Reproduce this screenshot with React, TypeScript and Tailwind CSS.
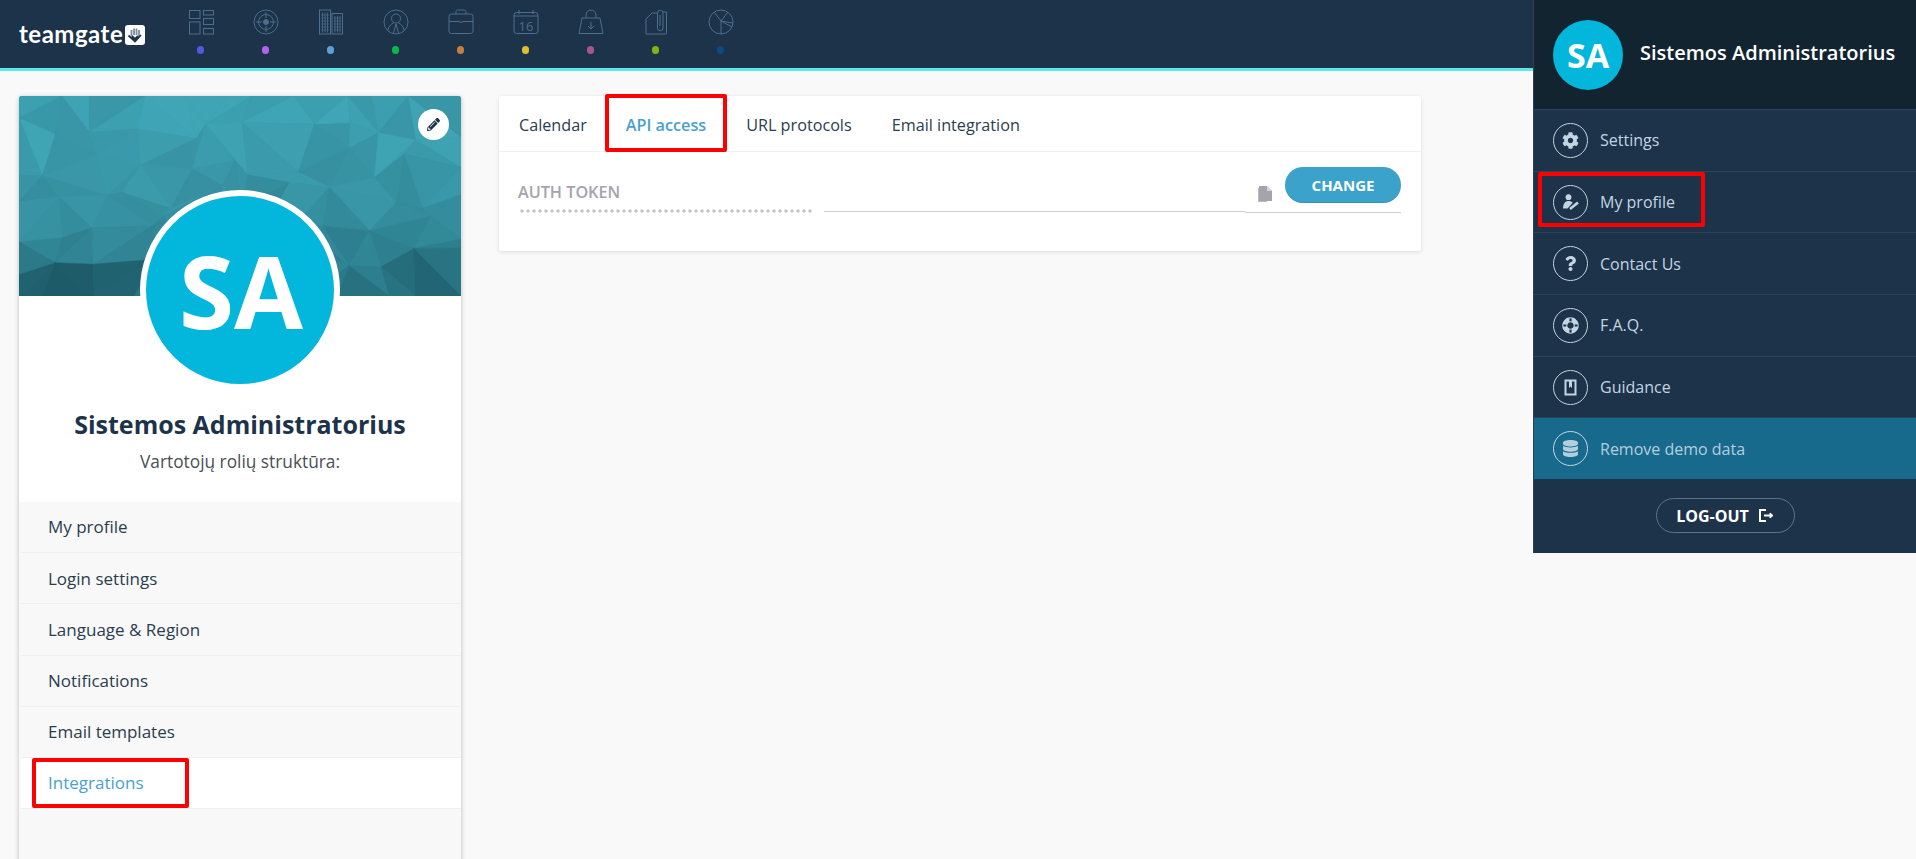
import React from 'react';
import { FaCog, FaQuestion, FaLifeRing, FaDatabase, FaPencilAlt } from 'react-icons/fa';

const font = { fontFamily: '"Open Sans", sans-serif' };

// low-poly banner: jittered triangle mesh with a fixed seed
const rand = (() => {
    let s = 73129;
    return () => {
        s = (s * 16807) % 2147483647;
        return s / 2147483647;
    };
})();

const mix = (t: number) => {
    const a = [66, 171, 188];
    const b = [26, 84, 98];
    const k = Math.max(0, Math.min(1, t));
    return `rgb(${a.map((v, i) => Math.round(v + (b[i] - v) * k)).join(',')})`;
};

const buildFacets = () => {
    const cols = 11;
    const rows = 6;
    const cw = 442 / cols;
    const ch = 200 / rows;
    const pts: number[][][] = [];
    for (let r = 0; r <= rows; r++) {
        pts[r] = [];
        for (let c = 0; c <= cols; c++) {
            const x = c * cw + (c === 0 || c === cols ? 0 : (rand() - 0.5) * cw * 0.9);
            const y = r * ch + (r === 0 || r === rows ? 0 : (rand() - 0.5) * ch * 0.9);
            pts[r][c] = [x, y];
        }
    }
    const out: { p: string; fill: string }[] = [];
    const tone = (tri: number[][]) => {
        const x = (tri[0][0] + tri[1][0] + tri[2][0]) / 3;
        const y = (tri[0][1] + tri[1][1] + tri[2][1]) / 3;
        let t = 0.12 + Math.pow(y / 200, 1.8) * 0.5 + (rand() - 0.4) * 0.2;
        if (y > 165 && x < 130) t += 0.32;
        if (y > 160 && x > 380) t += 0.22;
        return mix(t);
    };
    for (let r = 0; r < rows; r++) {
        for (let c = 0; c < cols; c++) {
            const a = pts[r][c];
            const b = pts[r][c + 1];
            const d = pts[r + 1][c];
            const e = pts[r + 1][c + 1];
            const tris = rand() > 0.5 ? [[a, b, d], [b, e, d]] : [[a, b, e], [a, e, d]];
            tris.forEach(tri => out.push({ p: tri.map(q => q.join(',')).join(' '), fill: tone(tri) }));
        }
    }
    return out;
};
const facets = buildFacets();

const NavIcon: React.FC<{ children: React.ReactNode }> = ({ children }) => (
    <svg width="26" height="26" viewBox="0 0 26 26" fill="none" stroke="#4d6e8e" strokeWidth="1">
        {children}
    </svg>
);

const navItems = [
    {
        dot: 'bg-[#5357e2]',
        icon: (
            <>
                <rect x="1.5" y="1.5" width="10.5" height="8" />
                <rect x="15.5" y="1.5" width="10" height="4.5" />
                <rect x="1.5" y="13" width="10.5" height="12" />
                <rect x="15.5" y="9.5" width="10" height="6" />
                <rect x="15.5" y="19.5" width="10" height="5.5" />
            </>
        ),
    },
    {
        dot: 'bg-[#b164ea]',
        icon: (
            <>
                <circle cx="13" cy="13" r="12" />
                <circle cx="13" cy="13" r="7.5" />
                <circle cx="13" cy="13" r="2.5" fill="#4d6e8e" />
                <path d="M13 3v6M13 17v6M3 13h6M17 13h6" />
            </>
        ),
    },
    {
        dot: 'bg-[#5f9fd6]',
        icon: (
            <>
                <rect x="1.5" y="1" width="11" height="24" />
                <rect x="14" y="4.5" width="10.5" height="20.5" />
                <path strokeWidth="0.8" d="M4.5 3.500v20M7 3.500v20M9.500 3.500v20M17 7v16.500M19.500 7v16.500M22 7v16.500" />
                <path strokeWidth="0.7" d="M3 6h8M3 9h8M3 12h8M3 15h8M3 18h8M3 21h8M15.500 9h7.500M15.500 12h7.500M15.500 15h7.500M15.500 18h7.500M15.500 21h7.500" />
            </>
        ),
    },
    {
        dot: 'bg-[#08b94a]',
        icon: (
            <>
                <circle cx="13" cy="13" r="12" />
                <circle cx="13" cy="9.5" r="4.5" />
                <path d="M5 21c1-4 3-6 5.500-7M21 21c-1-4-3-6-5.500-7M13 15l-2.500 9M13 15l2.500 9" />
            </>
        ),
    },
    {
        dot: 'bg-[#c47e3f]',
        icon: (
            <>
                <rect x="1" y="5" width="24" height="19.5" rx="2.5" />
                <path d="M8 5V2.500a1.500 1.500 0 0 1 1.500-1.500h7a1.500 1.500 0 0 1 1.500 1.500V5M1 12.500h10M15 12.500h10M11 13h4" />
            </>
        ),
    },
    {
        dot: 'bg-[#e4bd2e]',
        icon: (
            <>
                <rect x="1" y="3.5" width="24" height="21" rx="2.5" />
                <path d="M6 1v4M20 1v4M1 7h24" />
                <text x="13" y="22" textAnchor="middle" fontSize="13" fill="#4d6e8e" stroke="none" style={font}>16</text>
            </>
        ),
    },
    {
        dot: 'bg-[#a9558f]',
        icon: (
            <>
                <path d="M4 9h18l3 15.500H1z" />
                <path d="M8 9V6a5 5 0 0 1 10 0v3M13 13v7M10 17l3 3 3-3" />
            </>
        ),
    },
    {
        dot: 'bg-[#7ab80f]',
        icon: (
            <>
                <path d="M3 10l6-6h5M20 3h3.500v22H3V10" />
                <path d="M14.500 7v12a2.750 2.750 0 0 0 5.500 0V4a2.750 2.750 0 0 0-5.500 0v3" />
                <path d="M17 6v11" />
            </>
        ),
    },
    {
        dot: 'bg-[#0b4a82]',
        icon: (
            <>
                <circle cx="13" cy="13" r="12" />
                <path d="M13 25V12L6 3M13 12l7-9M13 12l11.500 2M13 12l11 6" />
            </>
        ),
    },
];

const Annotation: React.FC<{ className: string }> = ({ className }) => (
    <div className={`absolute border-[4px] border-[#ff0000] rounded-[2px] pointer-events-none ${className}`} />
);

const sideItems = ['My profile', 'Login settings', 'Language & Region', 'Notifications', 'Email templates', 'Integrations'];

const tabs = ['Calendar', 'API access', 'URL protocols', 'Email integration'];

const GuidanceIcon = () => (
    <svg width="13" height="17" viewBox="0 0 13 17" fill="none">
        <rect x="0.5" y="0.5" width="12" height="16" fill="#c3d5e3" />
        <rect x="2.5" y="2.5" width="8" height="12" fill="#1c3349" />
        <path d="M5 1v8l1.500-1.500L8 9V1z" fill="#c3d5e3" />
    </svg>
);

const ProfileIcon = () => (
    <svg width="18" height="16" viewBox="0 0 18 16" fill="#c3d5e3">
        <circle cx="6.5" cy="3.2" r="2.9" />
        <path d="M1 14.500c0-5 2.200-7.500 5.500-7.500 2 0 3.200.7 4.200 1.700L5.500 14.500z" />
        <path d="M8 15l8-6.500" stroke="#c3d5e3" strokeWidth="2.600" />
    </svg>
);

const panelItems: { label: string; icon: React.ReactNode; active?: boolean }[] = [
    { label: 'Settings', icon: <FaCog size={17} /> },
    { label: 'My profile', icon: <ProfileIcon /> },
    { label: 'Contact Us', icon: <FaQuestion size={15} /> },
    { label: 'F.A.Q.', icon: <FaLifeRing size={17} className="rotate-45" /> },
    { label: 'Guidance', icon: <GuidanceIcon /> },
    { label: 'Remove demo data', icon: <FaDatabase size={17} />, active: true },
];

const App: React.FC = () => {
    return (
        <div className="relative h-[859px] w-[1916px] overflow-hidden bg-[#f9f9f9]" style={font}>
            <header className="flex h-[71px] border-b-[3px] border-[#5ce8ea] bg-[#1c3349]">
                <div className="flex h-[68px] w-[168px] shrink-0 items-start pl-[19px] pt-[19px]">
                    <span className="text-[24px] font-bold leading-[30px] tracking-[0.5px] text-white" style={{ fontFamily: 'Lato, sans-serif' }}>teamgate</span>
                    <span className="ml-[2px] mt-[6px] flex h-[20px] w-[20px] items-center justify-center rounded-[3px] bg-white">
                        <svg width="16" height="16" viewBox="0 0 16 16" fill="none">
                            <path d="M4.500 3v6M7 1.500V8M9.500 1.500V8M12 3v6" stroke="#7d8c99" strokeWidth="1.800" />
                            <path d="M1.500 8.500L8 14.500l6-6.500M5 9l3 3 3-3" stroke="#1c3349" strokeWidth="1.800" />
                        </svg>
                    </span>
                </div>
                <nav className="flex">
                    {navItems.map((item, i) => (
                        <div key={i} className="flex h-[68px] w-[65px] flex-col items-center pt-[9px]">
                            <NavIcon>{item.icon}</NavIcon>
                            <span className={`mt-[11px] h-[8px] w-[7px] rounded-full ${item.dot}`} />
                        </div>
                    ))}
                </nav>
            </header>

            <main className="flex items-start gap-[38px] pl-[19px] pt-[25px]">
                <aside className="h-[800px] w-[442px] shrink-0 overflow-hidden rounded-[3px] bg-[#f8f8f9] shadow-[0_1px_5px_rgba(0,0,0,0.25)]">
                    <div className="relative h-[200px] bg-[#3a9cae]">
                        <svg width="442" height="200" viewBox="0 0 442 200" className="block">
                            {facets.map((f, i) => (
                                <polygon key={i} points={f.p} fill={f.fill} stroke={f.fill} strokeWidth="0.5" />
                            ))}
                        </svg>
                        <button className="absolute right-[12px] top-[13px] flex h-[31px] w-[31px] items-center justify-center rounded-full bg-white text-[#1c3349]">
                            <FaPencilAlt size={13} />
                        </button>
                    </div>
                    <div className="flex flex-col items-center bg-white pb-[28px]">
                        <div className="relative z-10 -mt-[106px] flex h-[200px] w-[200px] items-center justify-center rounded-full border-[6px] border-white bg-[#03b6dc] pl-[2px] text-[100px] font-bold leading-none text-white">
                            SA
                        </div>
                        <h1 className="mt-[17px] text-[25px] font-bold leading-[34px] text-[#1c3349]">Sistemos Administratorius</h1>
                        <p className="mt-[9px] text-[17.300px] leading-[24px] text-[#4a4f55]">Vartotojų rolių struktūra:</p>
                    </div>
                    <ul>
                        {sideItems.map(label => {
                            const active = label === 'Integrations';
                            return (
                                <li key={label} className={`relative ml-[2px] flex h-[51.2px] items-center border-b border-[#eeeff1] pl-[27px] text-[17px] ${active ? 'bg-white text-[#4a9fce]' : 'text-[#2a3d4e]'}`}>
                                    {label}
                                    {active && <Annotation className="left-[11px] top-0 h-[50px] w-[157px]" />}
                                </li>
                            );
                        })}
                    </ul>
                </aside>

                <section className="h-[155px] w-[922px] shrink-0 rounded-[2px] bg-white shadow-[0_1px_4px_rgba(0,0,0,0.12)]">
                    <div className="flex h-[56px] items-center border-b border-[#f0f0f0] pl-[20px] pt-[3px] text-[16.200px] text-[#2a3d4e]">
                        {tabs.map((tab, i) => (
                            <div key={tab} className={`relative ${i === 0 ? '' : i === 1 ? 'ml-[39px]' : 'ml-[40px]'}`}>
                                <span className={i === 1 ? 'font-semibold text-[#4a9fce]' : ''}>{tab}</span>
                                {i === 1 && <Annotation className="-left-[21px] -top-[19px] h-[58px] w-[122px]" />}
                            </div>
                        ))}
                    </div>
                    <div className="flex h-[99px] pl-[19px] pr-[20px] pt-[15px]">
                        <div className="w-[289px] shrink-0 pt-[14px]">
                            <div className="text-[16.200px] font-semibold leading-[22px] text-[#a3a4ad]">AUTH TOKEN</div>
                            <div className="ml-[1px] mt-[6px] h-[4px] w-[293px] bg-[radial-gradient(circle,#c4c4c4_1.5px,transparent_1.7px)] bg-[length:6px_4px]" />
                        </div>
                        <div className="ml-[17px] mt-[44px] h-[1px] w-[421px] bg-[#cfcfcf]" />
                        <div className="flex h-[46px] w-[156px] items-start border-b border-[#cfcfcf]">
                            <svg width="15" height="17" viewBox="0 0 15 17" className="ml-[12px] mt-[18px] shrink-0">
                                <path d="M1 3h9v14H1z" fill="#c9b8ac" />
                                <path d="M2 1h8l5 5v10H2z" fill="#a3a4ad" />
                                <path d="M10 1l5 5h-5z" fill="#d8d8dc" />
                            </svg>
                            <button className="ml-[13px] h-[36px] w-[116px] rounded-full bg-[#3ba2cc] text-[15px] font-bold text-white shadow-[inset_0_-1px_0_rgba(0,0,0,0.1)]">CHANGE</button>
                        </div>
                    </div>
                </section>
            </main>

            <div className="absolute right-0 top-0 flex h-[553px] w-[383px] flex-col border-l border-[#2a4357] bg-[#1c3349]">
                <div className="flex h-[110px] items-center border-b border-[#2a4357] bg-[#132431] pl-[19px]">
                    <div className="flex h-[70px] w-[70px] items-center justify-center rounded-full bg-[#03b6dc] text-[34px] font-bold leading-none text-white">SA</div>
                    <span className="relative -top-[2px] ml-[17px] text-[20px] font-semibold text-white">Sistemos Administratorius</span>
                </div>
                {panelItems.map(item => (
                    <div key={item.label} className={`relative flex h-[61.7px] items-center border-b pl-[19px] text-[16px] ${item.active ? 'border-[#1c3349] bg-[#176a8c] text-[#b3cfde]' : 'border-[#2a4357] text-[#c3d5e3]'}`}>
                        <span className="flex h-[35px] w-[35px] shrink-0 items-center justify-center rounded-full border border-[#c3d5e3]">{item.icon}</span>
                        <span className="ml-[12px]">{item.label}</span>
                        {item.label === 'My profile' && <Annotation className="left-[4px] top-0 h-[55px] w-[167px]" />}
                    </div>
                ))}
                <div className="flex flex-1 items-start justify-center pt-[18px]">
                    <button className="flex h-[35px] w-[139px] items-center justify-center gap-[10px] rounded-full border border-[#5d7488] text-[16px] font-bold text-white">
                        LOG-OUT
                        <svg width="15" height="13" viewBox="0 0 15 13" fill="none" stroke="white" strokeWidth="2">
                            <path d="M7 1H1v11h6" />
                            <path d="M5 6.5h7" />
                            <path d="M11 4l3 2.500-3 2.500z" fill="white" strokeWidth="1" />
                        </svg>
                    </button>
                </div>
            </div>
        </div>
    );
};

export default App;
